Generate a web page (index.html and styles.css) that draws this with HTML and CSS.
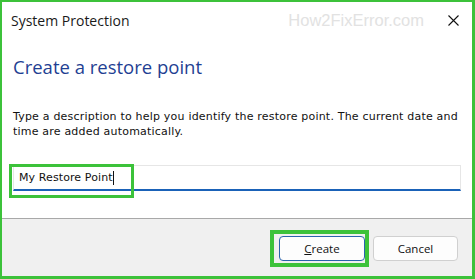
FILE: index.html
```html
<!DOCTYPE html>
<html>
<head>
<meta charset="utf-8">
<link rel="stylesheet" href="styles.css">
</head>
<body>
<div class="window">
  <div class="titlebar">
    <span class="title">System Protection</span>
    <span class="watermark">How2FixError.com</span>
    <span class="close">
      <svg width="11" height="11" viewBox="0 0 11 11"><path d="M0.5 0.5 L10.5 10.5 M10.5 0.5 L0.5 10.5" stroke="#111" stroke-width="1.1" fill="none"/></svg>
    </span>
  </div>
  <div class="main">
    <h1 class="heading">Create a restore point</h1>
    <p class="desc">Type a description to help you identify the restore point. The current date and time are added automatically.</p>
    <div class="input">
      <span class="value">My Restore Point</span><span class="caret"></span>
      <span class="mark mark-input"></span>
    </div>
  </div>
  <div class="footer">
    <div class="btn-wrap">
      <button class="btn btn-default"><u>C</u>reate</button>
      <span class="mark mark-btn"></span>
    </div>
    <button class="btn btn-cancel">Cancel</button>
  </div>
</div>
</body>
</html>
```
FILE: styles.css
```css
html, body {
  margin: 0;
  padding: 0;
  background: #fff;
}
.window {
  box-sizing: border-box;
  width: 475px;
  height: 279px;
  border-style: solid;
  border-color: #3cc23a;
  border-width: 2px 3px 3px 2px;
  background: #fff;
  display: flex;
  flex-direction: column;
  font-family: "Open Sans", "Noto Sans", sans-serif;
  color: #111;
}
.titlebar {
  height: 36px;
  flex: none;
  display: flex;
  align-items: center;
  padding-left: 9px;
}
.title {
  font-size: 14px;
  color: #1a1a1a;
}
.watermark {
  margin-left: auto;
  font-family: "Liberation Sans", sans-serif;
  font-size: 16.5px;
  color: #e2e2e2;
  margin-right: 24px;
}
.close {
  width: 11px;
  height: 11px;
  margin-right: 13px;
  display: flex;
}
.main {
  height: 180px;
  flex: none;
  box-sizing: border-box;
  padding: 17px 11px 0 11px;
}
.heading {
  margin: 0;
  font-weight: normal;
  font-size: 18.5px;
  line-height: 24px;
  color: #1f3f93;
}
.desc {
  margin: 30px 0 0 0;
  font-family: "DejaVu Sans", sans-serif;
  font-size: 11px;
  line-height: 15px;
  letter-spacing: 0.2px;
  color: #111;
}
.input {
  position: relative;
  margin-top: 26px;
  box-sizing: border-box;
  width: 448px;
  height: 26px;
  border: 1px solid #e6e6e6;
  border-bottom: 2px solid #1a62b8;
  display: flex;
  align-items: center;
  padding-left: 5px;
  font-family: "DejaVu Sans", sans-serif;
  font-size: 11px;
  letter-spacing: 0.1px;
  color: #111;
}
.caret {
  width: 1px;
  height: 14px;
  background: #111;
}
.mark {
  position: absolute;
  box-sizing: border-box;
  border: 3px solid #3cc23a;
}
.mark-input {
  left: -5px;
  top: -2px;
  width: 125px;
  height: 34px;
}
.footer {
  flex: 1;
  background: #f0f0f0;
  border-top: 1px solid #a8a8a8;
  display: flex;
  justify-content: flex-end;
  align-items: flex-start;
  gap: 8px;
  padding: 17px 14px 0 0;
}
.btn-wrap {
  position: relative;
  display: flex;
}
.btn {
  width: 86px;
  height: 25px;
  box-sizing: border-box;
  border: 1px solid #d0d0d0;
  border-radius: 4px;
  background: #fdfdfd;
  font-family: "Open Sans", "Noto Sans", sans-serif;
  font-size: 11.5px;
  color: #111;
  padding: 0;
}
.btn-cancel {
  width: 85px;
}
.btn-default {
  border-color: #2a64ad;
}
.mark-btn {
  left: -9px;
  top: -6px;
  width: 99px;
  height: 37px;
  border-width: 4px;
}
```
